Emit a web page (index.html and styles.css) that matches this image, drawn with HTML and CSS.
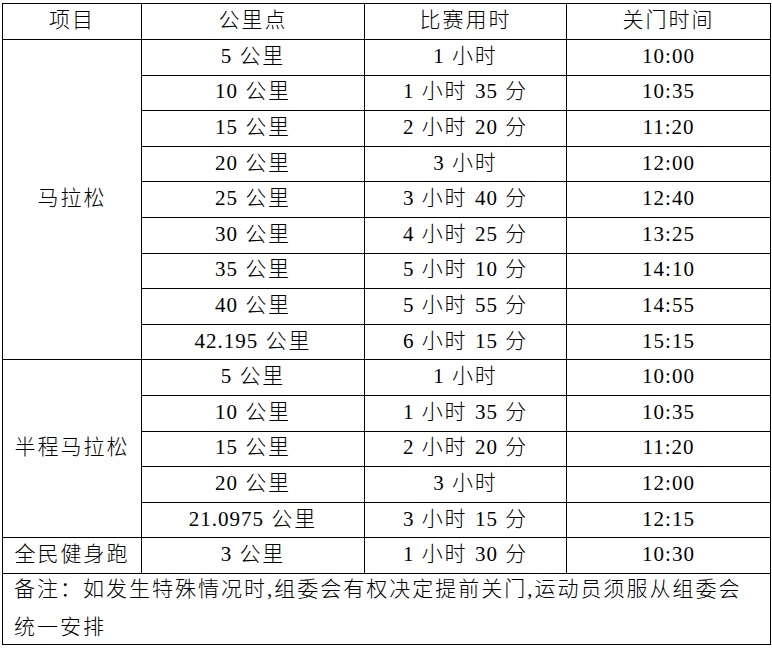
FILE: index.html
```html
<!DOCTYPE html>
<html lang="zh-CN">
<head>
<meta charset="utf-8">
<title>关门时间</title>
<link rel="stylesheet" href="styles.css">
</head>
<body>
<table class="schedule">
  <colgroup>
    <col class="c1"><col class="c2"><col class="c3"><col class="c4">
  </colgroup>
  <thead>
    <tr><th>项目</th><th>公里点</th><th>比赛用时</th><th>关门时间</th></tr>
  </thead>
  <tbody>
    <tr><td class="event" rowspan="9">马拉松</td><td><span class="n">5</span> 公里</td><td><span class="n">1</span> 小时</td><td class="n">10:00</td></tr>
    <tr><td><span class="n">10</span> 公里</td><td><span class="n">1</span> 小时 <span class="n">35</span> 分</td><td class="n">10:35</td></tr>
    <tr><td><span class="n">15</span> 公里</td><td><span class="n">2</span> 小时 <span class="n">20</span> 分</td><td class="n">11:20</td></tr>
    <tr><td><span class="n">20</span> 公里</td><td><span class="n">3</span> 小时</td><td class="n">12:00</td></tr>
    <tr><td><span class="n">25</span> 公里</td><td><span class="n">3</span> 小时 <span class="n">40</span> 分</td><td class="n">12:40</td></tr>
    <tr><td><span class="n">30</span> 公里</td><td><span class="n">4</span> 小时 <span class="n">25</span> 分</td><td class="n">13:25</td></tr>
    <tr><td><span class="n">35</span> 公里</td><td><span class="n">5</span> 小时 <span class="n">10</span> 分</td><td class="n">14:10</td></tr>
    <tr><td><span class="n">40</span> 公里</td><td><span class="n">5</span> 小时 <span class="n">55</span> 分</td><td class="n">14:55</td></tr>
    <tr><td><span class="n">42.195</span> 公里</td><td><span class="n">6</span> 小时 <span class="n">15</span> 分</td><td class="n">15:15</td></tr>
    <tr><td class="event" rowspan="5">半程马拉松</td><td><span class="n">5</span> 公里</td><td><span class="n">1</span> 小时</td><td class="n">10:00</td></tr>
    <tr><td><span class="n">10</span> 公里</td><td><span class="n">1</span> 小时 <span class="n">35</span> 分</td><td class="n">10:35</td></tr>
    <tr><td><span class="n">15</span> 公里</td><td><span class="n">2</span> 小时 <span class="n">20</span> 分</td><td class="n">11:20</td></tr>
    <tr><td><span class="n">20</span> 公里</td><td><span class="n">3</span> 小时</td><td class="n">12:00</td></tr>
    <tr><td><span class="n">21.0975</span> 公里</td><td><span class="n">3</span> 小时 <span class="n">15</span> 分</td><td class="n">12:15</td></tr>
    <tr><td class="event">全民健身跑</td><td><span class="n">3</span> 公里</td><td><span class="n">1</span> 小时 <span class="n">30</span> 分</td><td class="n">10:30</td></tr>
    <tr class="note-row"><td class="note" colspan="4"><p>备注：如发生特殊情况时,组委会有权决定提前关门,运动员须服从组委会统一安排</p></td></tr>
  </tbody>
</table>
</body>
</html>
```
FILE: styles.css
```css
html, body {
  margin: 0;
  padding: 0;
  background: #ffffff;
}

body {
  padding: 3px 0 0 2px;
  font-family: "Liberation Serif", "Noto Sans CJK SC", serif;
  font-size: 21px;
  color: #000000;
}

.schedule {
  border-collapse: collapse;
  table-layout: fixed;
  width: 768px;
}

.c1 { width: 139px; }
.c2 { width: 223px; }
.c3 { width: 202px; }
.c4 { width: 204px; }

.schedule th,
.schedule td {
  border: 1px solid #000000;
  padding: 0 0 3px;
  height: 31.6px;
  text-align: center;
  vertical-align: middle;
  font-weight: 300;
  letter-spacing: 2px;
  line-height: 24px;
  white-space: nowrap;
}

.schedule thead th {
  height: 32px;
}

.schedule .n {
  letter-spacing: 1px;
}

.schedule td.note {
  height: 70px;
  text-align: left;
  vertical-align: top;
  padding: 0 8px 0 11px;
  white-space: normal;
}

.note p {
  margin: -4px 0 -2px;
  line-height: 38px;
}
```
